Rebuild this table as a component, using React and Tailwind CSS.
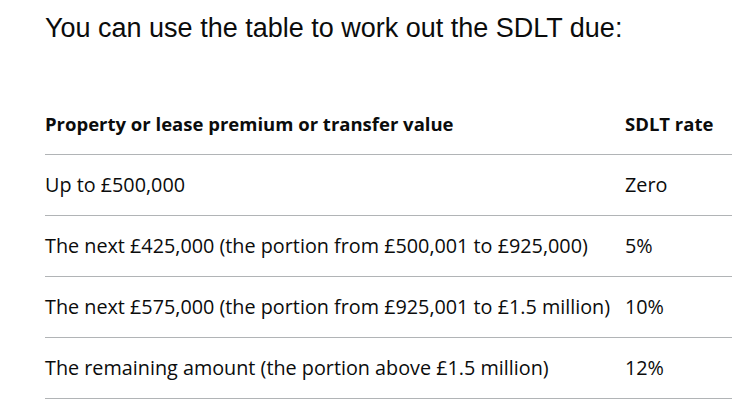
export default function App() {
  const rows = [
    ["Up to £500,000", "Zero"],
    ["The next £425,000 (the portion from £500,001 to £925,000)", "5%"],
    ["The next £575,000 (the portion from £925,001 to £1.5 million)", "10%"],
    ["The remaining amount (the portion above £1.5 million)", "12%"],
  ];
  return (
    <div className="min-h-[419px] bg-white pl-[45px] pt-[13px] text-[#0b0c0c]">
      <h2 className="font-['Liberation_Sans',Arial,sans-serif] text-[27px] leading-[30px] font-normal mb-[51px]">
        You can use the table to work out the SDLT due:
      </h2>
      <table className="w-[687px] table-fixed border-collapse font-['Open_Sans',sans-serif] text-[19.8px] leading-[25px]">
        <colgroup>
          <col className="w-[580px]" />
          <col className="w-[107px]" />
        </colgroup>
        <thead>
          <tr className="border-b border-[#b1b4b6]">
            <th className="pt-[17px] pb-[18px] pr-[10px] text-left font-bold text-[18.5px] whitespace-nowrap">
              Property or lease premium or transfer value
            </th>
            <th className="pt-[17px] pb-[18px] text-left font-bold text-[18.5px] whitespace-nowrap">SDLT rate</th>
          </tr>
        </thead>
        <tbody>
          {rows.map(([a, b]) => (
            <tr key={a} className="border-b border-[#b1b4b6]">
              <td className="pt-[17px] pb-[18px] pr-[10px] whitespace-nowrap">{a}</td>
              <td className="pt-[17px] pb-[18px]">{b}</td>
            </tr>
          ))}
        </tbody>
      </table>
    </div>
  );
}
